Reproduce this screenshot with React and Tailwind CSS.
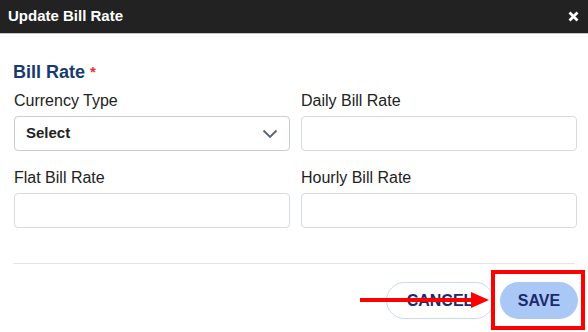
import React from "react";

function Field({ label, children }) {
  return (
    <div className="flex flex-col">
      <label className="text-[16px] leading-[18px] text-[#222] mb-[6px]">{label}</label>
      {children}
    </div>
  );
}

function TextBox() {
  return <div className="h-[35px] rounded-[4px] border border-[#d6dbe1] bg-white" />;
}

export default function App() {
  return (
    <div
      className="relative w-[588px] h-[332px] bg-white overflow-hidden"
      style={{ fontFamily: '"Liberation Sans", Arial, sans-serif' }}
    >
      <div className="h-[34px] bg-[#222222] border-b border-[#c4c4c4] flex items-center justify-between pl-[8px] pr-[9px]">
        <span className="text-white font-bold text-[15px]">Update Bill Rate</span>
        <svg width="11" height="11" viewBox="0 0 11 11">
          <path d="M1.5 1.5 L9.5 9.5 M9.5 1.5 L1.5 9.5" stroke="#fff" strokeWidth="2.8" />
        </svg>
      </div>
      <div className="pt-[27px]">
        <div className="pl-[13px] text-[18px] font-bold text-[#183b6e] leading-[22px]">
          Bill Rate <span className="text-[#e0313b] text-[15px] align-top">*</span>
        </div>
        <div className="grid grid-cols-2 gap-x-[11px] gap-y-[18px] mt-[9px] pl-[14px] pr-[11px]">
          <Field label="Currency Type">
            <div className="h-[35px] rounded-[4px] border border-[#c9ced4] bg-white flex items-center justify-between pl-[11px] pr-[11px]">
              <span className="text-[15px] font-bold text-[#222]">Select</span>
              <svg width="16" height="10" viewBox="0 0 16 10">
                <path d="M1.5 1.5 L8 8 L14.5 1.5" fill="none" stroke="#5b6673" strokeWidth="1.9" />
              </svg>
            </div>
          </Field>
          <Field label="Daily Bill Rate">
            <TextBox />
          </Field>
          <Field label="Flat Bill Rate">
            <TextBox />
          </Field>
          <Field label="Hourly Bill Rate">
            <TextBox />
          </Field>
        </div>
        <div className="mt-[35px] mx-[13px] border-t border-[#e6e6e6]" />
        <div className="flex justify-end items-center mt-[18px] pr-[10px] gap-[6px]">
          <button className="h-[37px] w-[108px] rounded-full border border-[#c6daf6] bg-white text-[#1b2a6b] font-bold text-[16px]">
            CANCEL
          </button>
          <button className="h-[37px] w-[78px] rounded-full bg-[#a9c8f6] text-[#1b2a6b] font-bold text-[16px]">
            SAVE
          </button>
        </div>
      </div>

      {/* annotation overlay: red highlight box and arrow */}
      <div className="absolute left-[491px] top-[270px] w-[94px] h-[60px] border-[4px] border-[#ff0000] pointer-events-none" />
      <svg className="absolute left-[358px] top-[290px] pointer-events-none" width="132" height="20" viewBox="0 0 132 20">
        <rect x="2" y="8" width="114" height="4" fill="#ff0000" />
        <polygon points="113,2 131,10 113,18" fill="#ff0000" />
      </svg>
    </div>
  );
}
